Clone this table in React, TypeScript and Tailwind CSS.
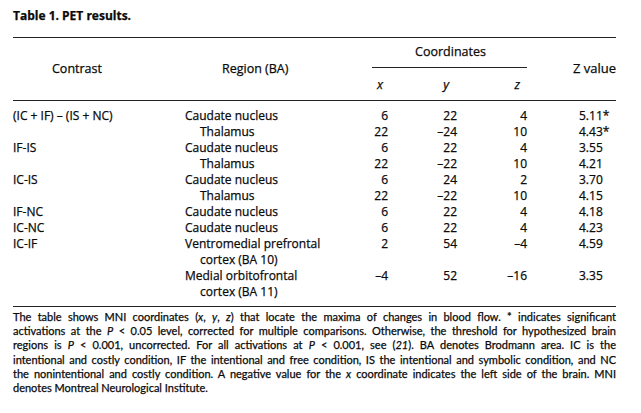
import React from "react";

type Row = {
  contrast?: string;
  region: string;
  indent?: boolean;
  x?: string;
  y?: string;
  z?: string;
  zv?: string;
};

const rows: Row[] = [
  { contrast: "(IC + IF) – (IS + NC)", region: "Caudate nucleus", x: "6", y: "22", z: "4", zv: "5.11*" },
  { region: "Thalamus", indent: true, x: "22", y: "–24", z: "10", zv: "4.43*" },
  { contrast: "IF-IS", region: "Caudate nucleus", x: "6", y: "22", z: "4", zv: "3.55" },
  { region: "Thalamus", indent: true, x: "22", y: "–22", z: "10", zv: "4.21" },
  { contrast: "IC-IS", region: "Caudate nucleus", x: "6", y: "24", z: "2", zv: "3.70" },
  { region: "Thalamus", indent: true, x: "22", y: "–22", z: "10", zv: "4.15" },
  { contrast: "IF-NC", region: "Caudate nucleus", x: "6", y: "22", z: "4", zv: "4.18" },
  { contrast: "IC-NC", region: "Caudate nucleus", x: "6", y: "22", z: "4", zv: "4.23" },
  { contrast: "IC-IF", region: "Ventromedial prefrontal", x: "2", y: "54", z: "–4", zv: "4.59" },
  { region: "cortex (BA 10)", indent: true },
  { region: "Medial orbitofrontal", x: "–4", y: "52", z: "–16", zv: "3.35" },
  { region: "cortex (BA 11)", indent: true },
];

const cols = "grid grid-cols-[172px_168px_35px_69px_70px_89px]";

const Line: React.FC<{ last?: boolean; children: React.ReactNode }> = ({ last, children }) => (
  <div className={last ? "whitespace-nowrap" : "text-justify [text-align-last:justify] whitespace-nowrap"}>
    {children}
  </div>
);

export default function App() {
  return (
    <div className="w-[641px] h-[413px] bg-white text-[#0a0a0a] pl-[13px] overflow-hidden font-['Open_Sans',sans-serif] [-webkit-text-stroke:0.25px_#0a0a0a]">
      <div className="w-[603px]">
        {/* Title */}
        <div className="pt-2 text-[12px] leading-4 font-bold">Table 1. PET results.</div>

        {/* Header */}
        <div className="mt-[13px] border-t-[1.5px] border-[#222]" />
        <div className={`${cols} grid-rows-[30px_32px] text-[12.5px]`}>
          <div className="row-span-2 flex items-center pl-[39px] pt-[1px]">Contrast</div>
          <div className="row-span-2 flex items-center pl-[37px] pt-[1px]">Region (BA)</div>
          <div className="col-span-3 ml-[19px] border-b border-[#222] flex items-center justify-center pl-[2px]">
            Coordinates
          </div>
          <div className="row-span-2 flex items-center justify-end pb-[1px] text-[13px]">Z value</div>
          <div className="flex items-center justify-end pr-[5px] pt-[2px] italic">x</div>
          <div className="flex items-center justify-end pr-[8px] pt-[2px] italic">y</div>
          <div className="flex items-center justify-end pr-[7px] pt-[2px] italic">z</div>
        </div>
        <div className="border-t-[1.5px] border-[#222]" />

        {/* Body */}
        <div className="pt-[7px] pb-[6px] text-[12px] leading-4">
          {rows.map((r, i) => (
            <div key={i} className={`${cols} h-4`}>
              <div className="whitespace-nowrap">{r.contrast}</div>
              <div className={r.indent ? "pl-[15px] whitespace-nowrap" : "whitespace-nowrap"}>{r.region}</div>
              <div className="text-right">{r.x}</div>
              <div className="text-right">{r.y}</div>
              <div className="text-right">{r.z}</div>
              <div className="pl-[52px] whitespace-nowrap">{r.zv}</div>
            </div>
          ))}
        </div>
        <div className="border-t-[1.5px] border-[#222]" />

        {/* Footnote */}
        <div className="pt-[3px] text-[11px] leading-[14.2px] font-['Lato',sans-serif]">
          <Line>
            The table shows MNI coordinates (<i>x</i>, <i>y</i>, <i>z</i>) that locate the maxima of changes in blood
            flow. * indicates significant
          </Line>
          <Line>
            activations at the <i>P</i> &lt; 0.05 level, corrected for multiple comparisons. Otherwise, the threshold
            for hypothesized brain
          </Line>
          <Line>
            regions is <i>P</i> &lt; 0.001, uncorrected. For all activations at <i>P</i> &lt; 0.001, see (<i>21</i>).
            BA denotes Brodmann area. IC is the
          </Line>
          <Line>
            intentional and costly condition, IF the intentional and free condition, IS the intentional and symbolic
            condition, and NC
          </Line>
          <Line>
            the nonintentional and costly condition. A negative value for the <i>x</i> coordinate indicates the left
            side of the brain. MNI
          </Line>
          <Line last>denotes Montreal Neurological Institute.</Line>
        </div>
      </div>
    </div>
  );
}
